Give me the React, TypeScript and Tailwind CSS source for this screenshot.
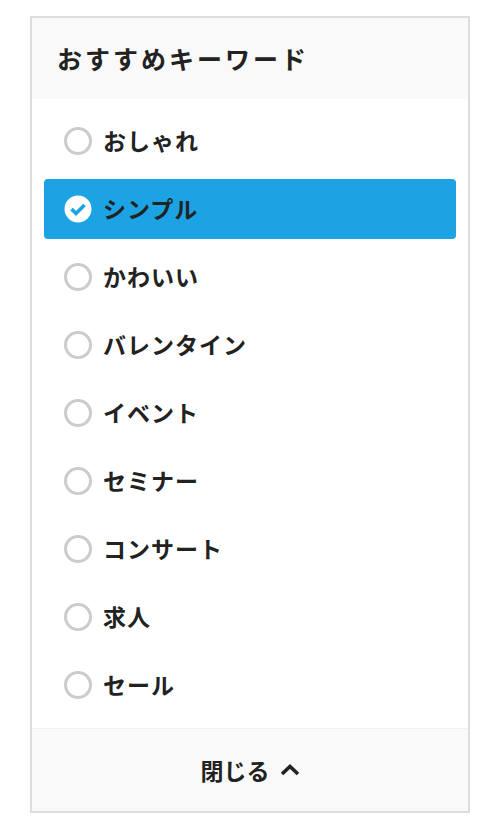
import React, { useState } from 'react';

const keywords = ['おしゃれ', 'シンプル', 'かわいい', 'バレンタイン', 'イベント', 'セミナー', 'コンサート', '求人', 'セール'];

const font = { fontFamily: '"Noto Sans CJK JP", "Noto Sans", sans-serif' };

const CheckCircle = () => (
  <svg width="28" height="28" viewBox="0 0 28 28">
    <circle cx="14" cy="14" r="13.5" fill="#fff" />
    <path d="M7.5 14l4.5 4.5 8.5-8.5" fill="none" stroke="#1ca3e3" strokeWidth="3.6" />
  </svg>
);

const App = () => {
  const [selected, setSelected] = useState(1);

  return (
    <div className="w-[498px] h-[834px] bg-white pt-4" style={font}>
      <div className="w-[440px] ml-[30px] border-2 border-[#dddddd] flex flex-col">
        <div className="bg-[#f9f9f9] h-[81px] flex items-center px-[25px]">
          <h2 className="text-[25px] leading-none font-bold text-[#222] tracking-[3px]">おすすめキーワード</h2>
        </div>
        <ul className="flex flex-col gap-2 px-3 pt-3 pb-[13px]">
          {keywords.map((k, i) => (
            <li
              key={k}
              onClick={() => setSelected(i)}
              className={`h-[60px] flex items-center gap-[11px] px-5 rounded cursor-pointer ${
                i === selected ? 'bg-[#1ca3e3]' : ''
              }`}
            >
              {i === selected ? (
                <CheckCircle />
              ) : (
                <span className="w-[28px] h-[28px] rounded-full border-[3px] border-[#cccccc] bg-white" />
              )}
              <span className="text-[23px] leading-none font-bold text-[#222] tracking-[1px] -translate-y-[1px]">{k}</span>
            </li>
          ))}
        </ul>
        <div className="bg-[#f9f9f9] border-t border-[#f0f0f0] h-[83px] flex items-center justify-center gap-[10px]">
          <span className="text-[23px] leading-none font-bold text-[#222]">閉じる</span>
          <svg width="20" height="12" viewBox="0 0 20 12">
            <path d="M2 10l8-7.5 8 7.5" fill="none" stroke="#222" strokeWidth="3.6" />
          </svg>
        </div>
      </div>
    </div>
  );
};

export default App;
